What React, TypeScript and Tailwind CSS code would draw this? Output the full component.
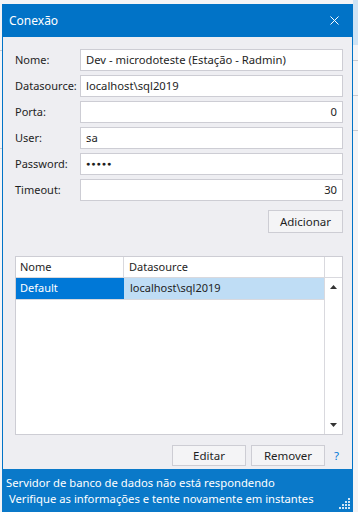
import { X } from "lucide-react";

const fields = [
  { label: "Nome:", value: "Dev - microdoteste (Estação - Radmin)", align: "left" },
  { label: "Datasource:", value: "localhost\\sql2019", align: "left" },
  { label: "Porta:", value: "0", align: "right" },
  { label: "User:", value: "sa", align: "left" },
  { label: "Password:", value: "●●●●●", align: "left", pwd: true },
  { label: "Timeout:", value: "30", align: "right" },
];

function Grip() {
  const dots = [
    [9, 0],
    [6, 3],
    [9, 3],
    [3, 6],
    [6, 6],
    [9, 6],
    [0, 9],
    [3, 9],
    [6, 9],
    [9, 9],
  ];
  return (
    <svg width="11" height="11" viewBox="0 0 11 11" className="absolute right-[3px] bottom-[3px]">
      {dots.map(([x, y], i) => (
        <rect key={i} x={x} y={y} width="2" height="2" fill="#cfe6f7" />
      ))}
    </svg>
  );
}

export default function App() {
  return (
    <div
      className="w-[358px] h-[512px] bg-[#f4f4f6] overflow-hidden relative pt-[4px] pl-[2px]"
      style={{ fontFamily: "'Noto Sans', 'Open Sans', sans-serif" }}
    >
      {/* window behind, visible at edges */}
      <div className="absolute left-0 top-[50px] w-[2px] h-px bg-[#c9c9cf]" />
      <div className="absolute left-0 top-[148px] w-[2px] h-px bg-[#c9c9cf]" />
      <div className="absolute right-0 top-0 w-[5px] h-[45px] bg-[#cfe3f4]" />
      <div className="absolute right-0 top-[60px] w-[5px] h-px bg-[#c9c9cf]" />
      <div className="absolute right-0 top-[95px] w-[5px] h-px bg-[#c9c9cf]" />
      <div className="absolute right-0 top-[130px] w-[5px] h-px bg-[#c9c9cf]" />

      <div className="w-[351px] h-[508px] flex flex-col bg-[#0173c7]">
        <div className="h-[33px] flex items-center justify-between pl-[7px] pr-[11px] text-white text-[12px]">
          <span>Conexão</span>
          <X size={15} strokeWidth={1.6} />
        </div>

        <div className="flex-1 mx-px bg-[#eeeef2] flex flex-col pt-[12px] pl-[12px] pr-[9px]">
          <div className="flex flex-col gap-[4px]">
            {fields.map((f) => (
              <div key={f.label} className="flex items-center h-[22px]">
                <div className="w-[65px] text-[11px] text-[#1e1e1e]">{f.label}</div>
                <div
                  className={`flex-1 h-[22px] bg-white border border-[#cdcdd4] flex items-center px-[5px] text-[11.25px] text-[#1e1e1e] ${
                    f.align === "right" ? "justify-end" : ""
                  }`}
                >
                  <span className={f.pwd ? "text-[7px] tracking-[1px]" : ""}>{f.value}</span>
                </div>
              </div>
            ))}
          </div>

          <div className="flex justify-end mt-[9px]">
            <button className="w-[75px] h-[23px] bg-[#f4f4f6] border border-[#cdcdd4] text-[11.5px] text-[#1e1e1e]">
              Adicionar
            </button>
          </div>

          <div className="mt-[23px] h-[179px] bg-white border border-[#cdcdd4] flex flex-col text-[11px]">
            <div className="flex h-[21px] border-b border-[#d9d9de]">
              <div className="w-[108px] border-r border-[#d9d9de] pl-[4px] flex items-center text-[#1e1e1e]">Nome</div>
              <div className="flex-1 border-r border-[#d9d9de] pl-[5px] flex items-center text-[#1e1e1e]">
                Datasource
              </div>
              <div className="w-[17px]" />
            </div>
            <div className="flex-1 flex">
              <div className="flex-1 flex flex-col">
                <div className="flex h-[22px] border-b border-[#d9d9de]">
                  <div className="w-[108px] bg-[#0078d7] text-white pl-[4px] flex items-center">Default</div>
                  <div className="flex-1 bg-[#bfddf5] pl-[6px] flex items-center text-[#1e1e1e]">localhost\sql2019</div>
                </div>
              </div>
              <div className="w-[18px] border-l border-[#d9d9de] flex flex-col items-center justify-between pt-[7px] pb-[7px] text-[#333]">
                <svg width="7" height="4" viewBox="0 0 7 4">
                  <path d="M0 4 L3.5 0 L7 4 Z" fill="#333" />
                </svg>
                <svg width="7" height="4" viewBox="0 0 7 4">
                  <path d="M0 0 L3.5 4 L7 0 Z" fill="#333" />
                </svg>
              </div>
            </div>
          </div>

          <div className="flex items-center justify-end mt-[10px]">
            <button className="w-[74px] h-[21px] bg-[#f4f4f6] border border-[#cdcdd4] text-[11.5px] text-[#1e1e1e]">
              Editar
            </button>
            <button className="ml-[5px] w-[74px] h-[21px] bg-[#f4f4f6] border border-[#cdcdd4] text-[11.5px] text-[#1e1e1e]">
              Remover
            </button>
            <span className="w-[18px] pl-[9px] text-[11.5px] text-[#0078d7]">?</span>
          </div>
        </div>

        <div className="h-[43px] relative bg-[#0a79c9] text-white text-[11.25px] leading-[16px] pt-[6px] pl-[4px]">
          <div>Servidor de banco de dados não está respondendo</div>
          <div> &nbsp;Verifique as informações e tente novamente em instantes</div>
          <Grip />
        </div>
      </div>
    </div>
  );
}
